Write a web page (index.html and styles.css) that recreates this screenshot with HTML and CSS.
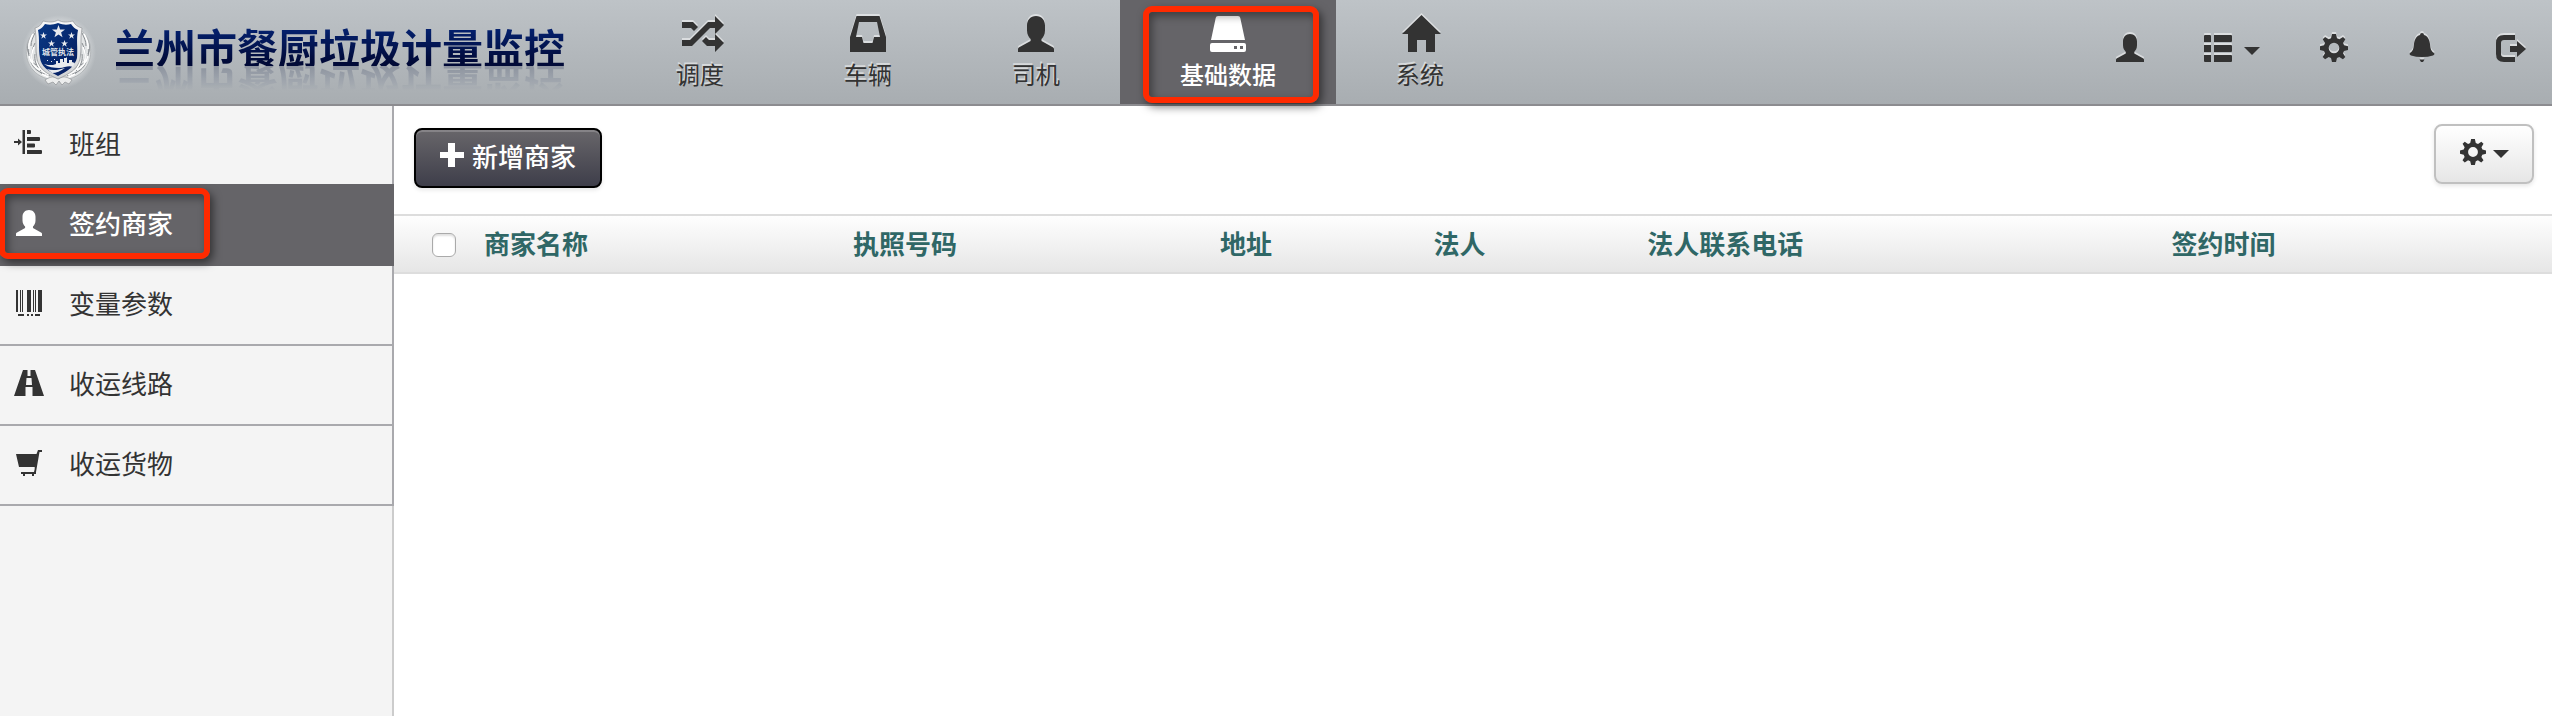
FILE: index.html
```html
<!DOCTYPE html>
<html lang="zh-CN">
<head>
<meta charset="utf-8">
<title>兰州市餐厨垃圾计量监控</title>
<link rel="stylesheet" href="styles.css">
</head>
<body>
<svg class="sprite" aria-hidden="true">
  <defs>
    <linearGradient id="shield-fill" x1="0" y1="0" x2="1" y2="1">
      <stop offset="0" stop-color="#0a3a86"/><stop offset="1" stop-color="#051a5c"/>
    </linearGradient>
    <linearGradient id="silver" x1="0" y1="0" x2="0" y2="1">
      <stop offset="0" stop-color="#f8f8f9"/><stop offset="1" stop-color="#d0d2d4"/>
    </linearGradient>
    <radialGradient id="halo">
      <stop offset="0.75" stop-color="#fff" stop-opacity="0.4"/><stop offset="1" stop-color="#fff" stop-opacity="0"/>
    </radialGradient>
    <symbol id="i-star" viewBox="0 0 20 20"><path d="M10 0l2.500 7h7.500l-6 4.500 2.200 7.500-6.200-4.500-6.200 4.500 2.200-7.500-6-4.500h7.500z"/></symbol>
    <symbol id="i-user" viewBox="0 0 36 36"><path d="M18 0c-5.500 0-9 4-9 9.500v5c0 4 1.800 6.500 3.600 8.500v2L.8 31.500Q0 32 0 33v3h36v-3q0-1-.8-1.500L23.500 25v-2c1.800-2 3.500-4.500 3.500-8.500v-5C27 4 23.500 0 18 0z"/></symbol>
    <symbol id="i-gear" viewBox="0 0 28 28"><path fill-rule="evenodd" d="M12 0h4l1 4.300 2.400 1 3.600-2.400 2.300 2.300-2.200 3.700 1 2.300L28 12.300v3.600l-4 1-1 2.400 2.300 3.600-2.400 2.400-3.600-2.300-2.300 1L16 28h-4l-1-4-2.300-1-3.600 2.300-2.400-2.400L5 19.300l-1-2.400-4-1v-3.600l4-1.100 1-2.300-2.200-3.700L5.100 2.900l3.600 2.400 2.300-1zM14 8.700a5.300 5.300 0 1 0 0 10.600 5.300 5.300 0 0 0 0-10.600z"/></symbol>
    <symbol id="i-caret" viewBox="0 0 16 8"><path d="M0 0h16L8 8z"/></symbol>
    <g id="laurel">
      <path d="M17 17C4 25 3 46 13 57c6 7 14 9 25 12v-8C26 58 18 50 16 40z" fill="#e3e5e6" stroke="#a4a7aa" stroke-width="0.700"/>
      <path d="M15 20c-2 4-4 8-4 13M11 24c-4 6-4 12-2 17M15 30c-3 6-4 11-2 18M8 36c0 7 3 13 8 16M15 41c-1 6 1 12 6 17M11 49c2 6 7 10 14 12M19 50c1 6 5 10 11 13M20 59c4 4 10 6 17 6" fill="none" stroke="#888c90" stroke-width="1"/>
      <path d="M13 21c-3 5-5 9-4 15M14 34c-3 6-3 10-1 16M9 43c2 7 5 11 11 14M17 48c1 6 5 11 12 14M22 61c5 3 9 4 15 6" fill="none" stroke="#fff" stroke-width="1.500"/>
    </g>
  </defs>
</svg>

<header class="topbar">
  <a class="brand" href="#">
    <svg class="emblem" viewBox="0 0 78 78" aria-hidden="true">
      <ellipse cx="39" cy="39" rx="37" ry="37" fill="url(#halo)"/>
      <use href="#laurel"/>
      <use href="#laurel" transform="matrix(-1 0 0 1 77 0)"/>
      <path d="M25 67c6-4 10-4 13-1 4-3 8-3 14 1l-3 4-4-2-3 3-3-4-3 4-3-3-5 2z" fill="#eceded" stroke="#8f9295" stroke-width="0.700"/>
      <path d="M38 7c5 3 10 2 15 1 2 4 5 6 9 7-2 11 0 20-2 31-2 10-11 15-22 20-11-5-19-10-21-20-2-11 0-20-2-31 4-1 6-3 8-7 5 1 10 2 15-1z" fill="url(#silver)" stroke="#94979a" stroke-width="0.700"/>
      <path d="M38 10c5 2 9 2 13 1 2 3 4 5 7 6-2 9 0 19-1 28-2 8-9 13-19 18-10-5-17-10-18-18-2-9 0-19-2-28 3-1 5-3 7-6 4 1 8 1 13-1z" fill="url(#shield-fill)"/>
      <g fill="#e8eaee">
        <use href="#i-star" x="32" y="12" width="13" height="13"/>
        <use href="#i-star" x="20" y="19" width="7" height="7"/>
        <use href="#i-star" x="48" y="19" width="7" height="7"/>
        <use href="#i-star" x="28" y="27" width="7" height="7"/>
        <use href="#i-star" x="41" y="27" width="7" height="7"/>
        <path d="M24 51l4 1h5l3-1v-3h2v2h2v-4h3v3h1v-4h2v-1l1 1v5h2v-3h3v2l3 1-2 4c-5-2-8 1-14 1-5 0-11-1-15-4zM27 47h1v1h-1zM31 48h1v1h-1zM34 46h1v1h-1z"/>
        <path d="M27 56c6 2 11 1 18-1-4 3-9 5-13 5z"/>
      </g>
      <text x="38" y="42" class="emblem-text" text-anchor="middle">城管执法</text>
    </svg>
    <span class="brand-name">兰州市餐厨垃圾计量监控</span>
  </a>
  <nav class="mainnav">
    <a href="#"><svg viewBox="0 0 36 36" class="ico"><path d="M0 6h11l5 5-4 4-3-3H0zM0 24h8L26 6h7V0l9 9-9 9v-6h-5L10 30H0zM24 21l3 3h6v-6l9 9-9 9v-6h-8l-5-5z"/></svg><span>调度</span></a>
    <a href="#"><svg viewBox="0 0 36 36" class="ico"><path fill-rule="evenodd" d="M6.500 0h23L36 21v15H0V21zM9 6L6 21h6l1.500 6h9L24 21h6L27 6z"/></svg><span>车辆</span></a>
    <a href="#"><svg class="ico"><use href="#i-user"/></svg><span>司机</span></a>
    <a href="#" class="active"><svg viewBox="0 0 36 36" class="ico"><path fill-rule="evenodd" d="M8 0h20q2 0 2.300 2L35 24H1L5.700 2Q6 0 8 0zM2 27h32q2 0 2 2v5q0 2-2 2H2q-2 0-2-2v-5q0-2 2-2zM24 30v3h3v-3zM30 30v3h3v-3z"/></svg><span>基础数据</span></a>
    <a href="#"><svg viewBox="0 0 36 36" class="ico"><path d="M19.500-1L39 18h-6v18h-9V24h-9v12H6V18H0z"/></svg><span>系统</span></a>
  </nav>
  <div class="tools">
    <button type="button" aria-label="用户"><svg class="ico"><use href="#i-user"/></svg></button>
    <button type="button" aria-label="列表"><svg viewBox="0 0 28 28" class="ico"><path d="M1 1h5q1 0 1 1v6H0V2q0-1 1-1zM10 1h17q1 0 1 1v5q0 1-1 1H10zM0 11h7v7H0zM10 11h17q1 0 1 1v5q0 1-1 1H10zM0 21h7v7H1q-1 0-1-1zM10 21h17q1 0 1 1v5q0 1-1 1H10z"/></svg><svg class="caret"><use href="#i-caret"/></svg></button>
    <button type="button" aria-label="设置"><svg class="ico"><use href="#i-gear"/></svg></button>
    <button type="button" aria-label="通知"><svg viewBox="0 0 28 28" class="ico"><path d="M14-1q2 0 2 2c4 1 5.500 5 6 9 .5 5 1 7 4 9 1 1 0 2-1 2.500Q20 23 14 23T3 21.500C2 21 1 20 2 19c3-2 3.500-4 4-9 .5-4 2-8 6-9q0-2 2-2zM11.500 25.500h5L15 28h-2z"/></svg></button>
    <button type="button" aria-label="退出"><svg viewBox="0 0 28 28" class="ico"><path d="M8 1h11v5H8Q5 6 5 9v11q0 3 3 3h11v5H8q-8 0-8-8V9q0-8 8-8zM21 7l9 8-9 8v-5h-7v-6h7z"/></svg></button>
  </div>
</header>

<div class="layout">
  <aside class="sidebar">
    <nav class="sidenav">
      <a href="#"><svg viewBox="0 0 26 26" class="ico"><path d="M-2 11h4V8.500L6 12l-4 3.500V13h-4zM6.500 0H9v24H6.500zM11 0h3q1 0 1 1v2q0 1-1 1h-3zM11 7h12q1 0 1 1v2q0 1-1 1H11zM11 13.500h7q1 0 1 1v2q0 1-1 1h-7zM11 20h14q1 0 1 1v2q0 1-1 1H11z"/></svg><span>班组</span></a>
      <a href="#" class="active"><svg class="ico"><use href="#i-user"/></svg><span>签约商家</span></a>
      <a href="#"><svg viewBox="0 0 26 26" class="ico"><path d="M0 0h2v22H0zM4 0h1v22H4zM6 0h1v22H6zM11 0h4v22h-4zM17 0h1v22h-1zM19 0h1v22h-1zM22 0h4v22h-4zM2 24h6v2H2zM11 24h2v2h-2zM15 24h2v2h-2zM19 24h5v2h-5z"/></svg><span>变量参数</span></a>
      <a href="#"><svg viewBox="0 0 26 26" class="ico"><path fill-rule="evenodd" d="M7 0h4.500v6h3V0H19l9 26H16.500v-9h-7v9H-2zM10.500 8h5l.5 7h-6z"/></svg><span>收运线路</span></a>
      <a href="#"><svg viewBox="0 0 26 26" class="ico"><path d="M0 4h20.500L22 0h4v2h-2.500L20 22v2h-2v2h-2v-2H9v2H7v-2H5v-2h13l.7-3v-2H3z"/></svg><span>收运货物</span></a>
    </nav>
  </aside>
  <main class="content">
    <div class="toolbar">
      <button type="button" class="btn btn-dark"><svg viewBox="0 0 24 24" class="ico"><path d="M8 0h7v9h9v6h-9v9H8v-9H0V9h8z"/></svg><span>新增商家</span></button>
      <button type="button" class="btn btn-light" aria-label="表格设置"><svg class="ico"><use href="#i-gear"/></svg><svg class="caret"><use href="#i-caret"/></svg></button>
    </div>
    <table class="grid">
      <colgroup><col class="c-check"><col class="c-name"><col class="c-license"><col class="c-short"><col class="c-short"><col class="c-phone"><col></colgroup>
      <thead>
        <tr>
          <th><input type="checkbox" aria-label="全选"></th>
          <th>商家名称</th><th>执照号码</th><th>地址</th><th>法人</th><th>法人联系电话</th><th>签约时间</th>
        </tr>
      </thead>
    </table>
  </main>
</div>
</body>
</html>
```
FILE: styles.css
```css
*, *::before, *::after { box-sizing: border-box; }
body {
  margin: 0;
  min-height: 100vh;
  display: flex;
  flex-direction: column;
  font-family: "Noto Sans CJK SC", sans-serif;
  font-size: 26px;
  color: #333;
  background: #fff;
}
a { color: inherit; text-decoration: none; }
button { font: inherit; color: inherit; cursor: pointer; }
svg { display: block; fill: currentColor; flex: none; overflow: visible; }
.sprite { position: absolute; width: 0; height: 0; }
.caret { width: 16px; height: 8px; }

.topbar {
  display: flex;
  align-items: stretch;
  height: 106px;
  border-bottom: 2px solid #8c8c90;
  background: linear-gradient(#bec3c7, #a8adb1);
}
.brand { display: flex; align-items: center; width: 616px; padding-left: 20px; gap: 16px; flex: none; }
.emblem { width: 78px; height: 78px; }
.emblem-text { font-size: 8px; font-weight: 700; fill: #dfe3ea; }
.brand-name {
  font-size: 41px;
  font-weight: 700;
  line-height: 40px;
  margin-bottom: 12px;
  white-space: nowrap;
  background: linear-gradient(#04206c 10%, #010a38 90%);
  -webkit-background-clip: text;
  background-clip: text;
  color: transparent;
  -webkit-box-reflect: below 0 linear-gradient(transparent 40%, rgba(0, 0, 0, 0.2));
}
.mainnav { display: flex; }
.mainnav a {
  display: flex;
  flex-direction: column;
  align-items: center;
  gap: 4px;
  padding: 16px 60px 0;
  font-size: 24px;
  line-height: 36px;
  text-shadow: -1px -2px 0 rgba(255, 255, 255, 0.5);
}
.mainnav .ico { width: 36px; height: 36px; }
.mainnav .ico, .tools svg { filter: drop-shadow(0 -2px 0 rgba(255, 255, 255, 0.5)); }
.mainnav .active {
  position: relative;
  color: #fff;
  background: #656468;
  font-weight: 500;
  text-shadow: none;
}
.mainnav .active .ico, .tools .caret { filter: none; }
.mainnav .active::after, .sidenav .active::after {
  content: "";
  position: absolute;
  z-index: 1;
  border: 6px solid #ff2a00;
  border-radius: 9px;
  box-shadow: 3px 4px 8px rgba(0, 0, 0, 0.5), inset 3px 4px 8px rgba(0, 0, 0, 0.4);
}
.mainnav .active::after { inset: 6px 17px 1px 23px; }

.tools { display: flex; align-items: center; gap: 60px; margin-left: auto; padding: 0 28px 8px 0; }
.tools button { display: flex; align-items: center; gap: 12px; padding: 0; border: 0; background: none; }
.tools .ico { width: 28px; height: 28px; }
.tools .caret { margin-top: 6px; }

.layout { display: flex; flex: 1; }
.sidebar { width: 394px; flex: none; background: linear-gradient(#ccc, #ccc) right / 2px 100% no-repeat #f4f4f4; }
.sidenav { border-right: 2px solid #a9a9ad; }
.sidenav a {
  display: flex;
  align-items: flex-start;
  gap: 27px;
  height: 80px;
  padding: 24px 16px 0;
  border-bottom: 2px solid #a9a9ad;
}
.sidenav .ico { width: 26px; height: 26px; }
.sidenav span { line-height: 26px; }
.sidenav .active {
  position: relative;
  height: 82px;
  margin: -2px -2px 0 0;
  padding-top: 26px;
  border-bottom-color: #656468;
  background: #656468;
  color: #fff;
  font-weight: 500;
}
.sidenav .active::after { left: -1px; top: 4px; width: 211px; height: 71px; }

.content { flex: 1; min-width: 0; }
.toolbar { display: flex; justify-content: space-between; align-items: flex-start; padding: 18px 18px 26px 20px; }
.btn { display: flex; align-items: center; height: 60px; border: 2px solid; border-radius: 8px; box-shadow: 0 2px 4px rgba(0, 0, 0, 0.1); }
.btn-dark {
  gap: 8px;
  margin-top: 4px;
  padding: 0 24px 6px;
  border-color: #000;
  background: linear-gradient(#68666a, #3e3e4a);
  color: #fff;
  font-weight: 500;
  box-shadow: inset 0 2px 0 rgba(255, 255, 255, 0.2), 0 2px 4px rgba(0, 0, 0, 0.1);
}
.btn-dark .ico { width: 24px; height: 24px; }
.btn-light { gap: 7px; padding: 0 23px 4px 24px; border-color: #c0c0c0; background: linear-gradient(#fff, #e6e6e6); }
.btn-light .ico { width: 26px; height: 26px; }
.btn-light .caret { margin-top: 4px; }

.grid { width: 100%; table-layout: fixed; border-collapse: separate; border-spacing: 0; }
.grid thead tr { background: linear-gradient(#fff, #e5e5e5); }
.grid th {
  height: 60px;
  padding: 0 0 2px;
  border-top: 2px solid #ddd;
  border-bottom: 2px solid #ddd;
  text-align: left;
  line-height: 36px;
  color: #2f6766;
  white-space: nowrap;
}
.grid input {
  display: block;
  appearance: none;
  width: 24px;
  height: 24px;
  margin: 4px 0 0 38px;
  border: 1px solid #aaa;
  border-radius: 6px;
  background: #fff;
  box-shadow: inset 0 2px 2px rgba(0, 0, 0, 0.12);
}
.c-check { width: 90px; }
.c-name { width: 17.1%; }
.c-license { width: 17%; }
.c-short { width: 9.9%; }
.c-phone { width: 24.3%; }
```
